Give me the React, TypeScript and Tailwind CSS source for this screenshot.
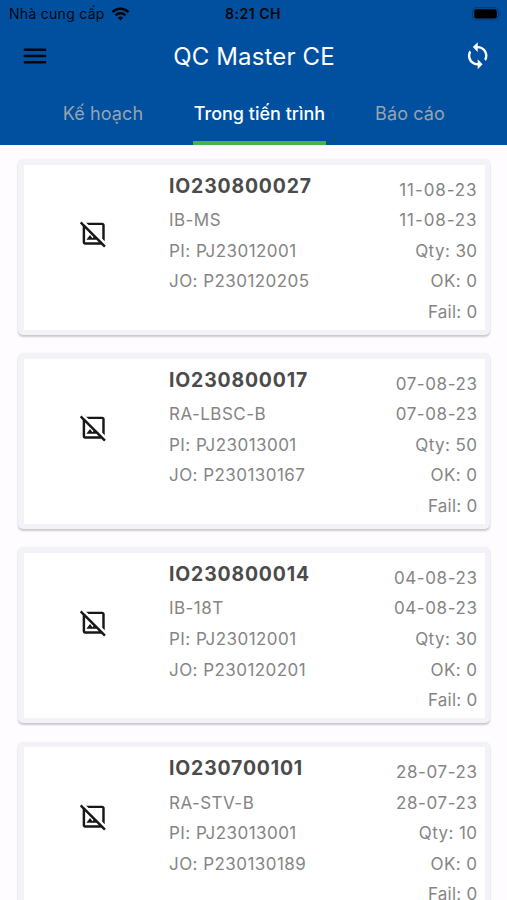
import React from "react";
import { MdMenu, MdSync, MdOutlineImageNotSupported } from "react-icons/md";

type Order = {
  id: string;
  model: string;
  pi: string;
  jo: string;
  date: string;
  qty: number;
};

const orders: Order[] = [
  { id: "IO230800027", model: "IB-MS", pi: "PJ23012001", jo: "P230120205", date: "11-08-23", qty: 30 },
  { id: "IO230800017", model: "RA-LBSC-B", pi: "PJ23013001", jo: "P230130167", date: "07-08-23", qty: 50 },
  { id: "IO230800014", model: "IB-18T", pi: "PJ23012001", jo: "P230120201", date: "04-08-23", qty: 30 },
  { id: "IO230700101", model: "RA-STV-B", pi: "PJ23013001", jo: "P230130189", date: "28-07-23", qty: 10 },
];

function WifiIcon() {
  return (
    <svg width="19" height="14" viewBox="0 0 18 14" fill="none" stroke="#02060c" strokeWidth="2.5">
      <path d="M1 5.1a11.5 11.5 0 0 1 16 0" />
      <path d="M4 8.3a7.2 7.2 0 0 1 10 0" />
      <path d="M9 13.6 6.3 10.8a3.9 3.9 0 0 1 5.4 0z" fill="#02060c" stroke="none" />
    </svg>
  );
}

function BatteryIcon() {
  return (
    <svg width="30" height="14" viewBox="0 0 30 14">
      <rect x="0.6" y="0.6" width="25.8" height="12.4" rx="3.8" fill="none" stroke="#053c78" strokeWidth="1.1" />
      <rect x="2.2" y="2.2" width="22.6" height="9.2" rx="2.2" fill="#000" />
      <path d="M27.7 4.8c1.6.7 1.6 3.3 0 4z" fill="#053c78" />
    </svg>
  );
}

function OrderCard({ order }: { order: Order }) {
  const dateSpacing = order.date.startsWith("11") ? "tracking-[0.9px]" : "tracking-[0.58px]";
  return (
    <article className="h-[176px] shrink-0 rounded-[5px] bg-[#f3f2f9] p-[5.5px] shadow-[0_2px_2px_rgba(0,0,0,0.2),0_0_2px_rgba(0,0,0,0.05)]">
      <div className="flex h-full bg-white pr-[7px]">
        <div className="flex w-[139px] items-center justify-center pb-[26px] pl-[2px]">
          <MdOutlineImageNotSupported className="size-[29.4px] text-[#171717]" />
        </div>
        <div className="ml-[6.5px] flex flex-1 flex-col whitespace-nowrap pt-[6px] text-[17px] leading-[30.6px] tracking-[0.45px] text-[#858585]">
          <h2 className="text-[19.4px] font-bold tracking-[0.85px] text-[#4b4b4b]">{order.id}</h2>
          <div className="mt-[4px]">{order.model}</div>
          <div>PI: {order.pi}</div>
          <div>JO: {order.jo}</div>
        </div>
        <div className="whitespace-nowrap pt-[10px] text-right text-[17px] leading-[30.6px] tracking-[0.42px] text-[#858585]">
          <div className={dateSpacing}>{order.date}</div>
          <div className={dateSpacing}>{order.date}</div>
          <div>Qty: {order.qty}</div>
          <div>OK: 0</div>
          <div className="tracking-[0.25px]">Fail: 0</div>
        </div>
      </div>
    </article>
  );
}

export default function App() {
  return (
    <div className="flex h-[900px] w-[507px] flex-col overflow-hidden bg-[#fefcff] font-['Inter','Noto_Sans',sans-serif]">
      <header className="flex h-[145px] shrink-0 flex-col bg-[#00509f]">
        <div className="grid h-[27px] grid-cols-[1fr_auto_1fr] items-center pl-[9px] pr-[7px] text-[14px] leading-[27px] text-[#02060c]">
          <div className="flex items-center gap-[6px]">
            <span className="tracking-[0.28px]">Nhà cung cấp</span>
            <WifiIcon />
          </div>
          <span className="pr-[3px] font-semibold tracking-[0.55px]">8:21 CH</span>
          <div className="-mr-[2px] flex justify-end">
            <BatteryIcon />
          </div>
        </div>
        <div className="grid h-[58px] grid-cols-[1fr_auto_1fr] items-center pl-[20px] pr-[15px]">
          <MdMenu className="size-[30px] text-[#02060c]" />
          <h1 className="pr-[4px] pt-[1px] text-[24px] tracking-[0.15px] text-white">QC Master CE</h1>
          <MdSync className="size-[29.4px] justify-self-end text-white" />
        </div>
        <nav className="flex h-[60px] pl-[44px] text-[18px] leading-[57px] text-[#9ba2aa]">
          <div className="w-[118px] text-center tracking-[0.1px]">Kế hoạch</div>
          <div className="ml-[31px] w-[133px] border-b-[4px] border-[#4caf50] text-center font-medium text-white">
            <span className="whitespace-nowrap">Trong tiến trình</span>
          </div>
          <div className="ml-[31px] w-[106px] text-center tracking-[0.1px]">Báo cáo</div>
        </nav>
      </header>
      <main className="flex flex-1 flex-col gap-[18.2px] overflow-hidden pl-[18px] pr-[17px] pt-[14px]">
        {orders.map((order) => (
          <OrderCard key={order.id} order={order} />
        ))}
      </main>
    </div>
  );
}
